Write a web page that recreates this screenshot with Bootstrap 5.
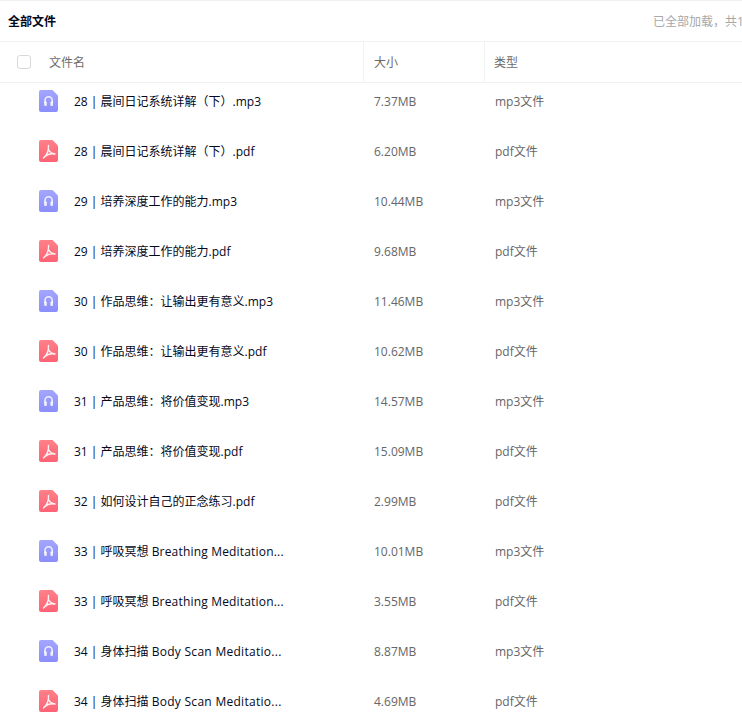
<!DOCTYPE html>
<html lang="zh-CN">
<head>
<meta charset="utf-8">
<title>全部文件</title>
<link href="https://cdn.jsdelivr.net/npm/bootstrap@5.3.0/dist/css/bootstrap.min.css" rel="stylesheet">
<style>
html,body{height:716px;overflow:hidden;background:#fff}
body{font-family:"Open Sans","Noto Sans CJK SC",sans-serif;font-size:12px;color:#03081a}
.shell{width:742px;height:716px;display:flex;flex-direction:column;overflow:hidden}
.topbar{height:42px;flex:none;border-top:1px solid #f1f2f4;border-bottom:1px solid #f1f2f4;padding-left:8px;overflow:hidden}
.topbar-title{font-weight:700;color:#03081a;padding-top:2px}
.topbar-status{color:#a8a8a8;white-space:nowrap;margin-left:auto;width:89px;overflow:hidden;flex:none;padding-top:2px}
.headrow{height:41px;flex:none;border-bottom:1px solid #f1f2f4;color:#6b6b6b}
.cell-name{width:364px;flex:none;border-right:1px solid #f1f2f4;height:100%}
.cell-name .lbl,.cell-size .lbl,.cell-type .lbl{padding-top:2px;display:block}
.cell-size{width:121px;flex:none;border-right:1px solid #f1f2f4;height:100%;padding-left:10px}
.cell-type{flex:1;padding-left:9px}
.tick{width:14px;height:14px;border:1px solid #d9d9d9;border-radius:3px;margin-left:17px;margin-right:18px;flex:none}
.listarea{flex:1;overflow:hidden;min-height:0}
.listinner{margin-top:-7px}
.filerow{height:50px}
.fname{padding-left:39px;width:364px;flex:none}
.fname svg{flex:none;margin-right:16px}
.fname span{white-space:nowrap;padding-top:2px}
.fname .latin{letter-spacing:.18px;padding-top:0}
.fname .latin-b{letter-spacing:.28px;padding-top:0}
.fsize{width:121px;flex:none;padding-left:10px;color:#666;padding-top:2px}
.ftype{flex:1;padding-left:10px;color:#666;padding-top:2px}
</style>
</head>
<body>
<svg width="0" height="0" class="d-block" aria-hidden="true">
<defs>
<linearGradient id="ga" x1="0" y1="0" x2="0" y2="1"><stop offset="0" stop-color="#a3a6ff"/><stop offset="1" stop-color="#8b8dfb"/></linearGradient>
<linearGradient id="gp" x1="0" y1="0" x2="0" y2="1"><stop offset="0" stop-color="#ff8088"/><stop offset="1" stop-color="#fc6375"/></linearGradient>
<symbol id="ic-audio" viewBox="0 0 19 22">
<path d="M2 0H13.500L19 5.500V20a2 2 0 0 1-2 2H2a2 2 0 0 1-2-2V2a2 2 0 0 1 2-2Z" fill="url(#ga)"/>
<path d="M6 13V10.300a3.600 3.600 0 0 1 7.200 0V13" fill="none" stroke="#fff" stroke-opacity=".85" stroke-width="1.600"/>
<rect x="5.200" y="11.500" width="2.600" height="4.500" rx="1" fill="#fff" fill-opacity=".85"/>
<rect x="11.400" y="11.500" width="2.600" height="4.500" rx="1" fill="#fff" fill-opacity=".85"/>
</symbol>
<symbol id="ic-pdf" viewBox="0 0 19 22">
<path d="M2 0H13.500L19 5.500V20a2 2 0 0 1-2 2H2a2 2 0 0 1-2-2V2a2 2 0 0 1 2-2Z" fill="url(#gp)"/>
<path d="M9.500 5.500C9.800 10 7.800 15 4.500 18M9.500 9.500C10.500 12 13 13.600 16 14M5.500 17C8 14.500 12 13.400 16 14" fill="none" stroke="#fff" stroke-opacity=".9" stroke-width="1.400" stroke-linecap="round"/>
</symbol>
</defs>
</svg>
<div class="shell">
  <div class="topbar d-flex align-items-center">
    <div class="topbar-title">全部文件</div>
    <div class="topbar-status">已全部加载，共1</div>
  </div>
  <div class="headrow d-flex align-items-center">
    <div class="cell-name d-flex align-items-center"><span class="tick"></span><span class="lbl">文件名</span></div>
    <div class="cell-size d-flex align-items-center"><span class="lbl">大小</span></div>
    <div class="cell-type"><span class="lbl">类型</span></div>
  </div>
  <div class="listarea">
    <div class="listinner">
      <div class="filerow d-flex align-items-center"><div class="fname d-flex align-items-center"><svg width="19" height="22"><use href="#ic-audio"/></svg><span>28 | 晨间日记系统详解（下）.mp3</span></div><div class="fsize">7.37MB</div><div class="ftype">mp3文件</div></div>
      <div class="filerow d-flex align-items-center"><div class="fname d-flex align-items-center"><svg width="19" height="22"><use href="#ic-pdf"/></svg><span>28 | 晨间日记系统详解（下）.pdf</span></div><div class="fsize">6.20MB</div><div class="ftype">pdf文件</div></div>
      <div class="filerow d-flex align-items-center"><div class="fname d-flex align-items-center"><svg width="19" height="22"><use href="#ic-audio"/></svg><span>29 | 培养深度工作的能力.mp3</span></div><div class="fsize">10.44MB</div><div class="ftype">mp3文件</div></div>
      <div class="filerow d-flex align-items-center"><div class="fname d-flex align-items-center"><svg width="19" height="22"><use href="#ic-pdf"/></svg><span>29 | 培养深度工作的能力.pdf</span></div><div class="fsize">9.68MB</div><div class="ftype">pdf文件</div></div>
      <div class="filerow d-flex align-items-center"><div class="fname d-flex align-items-center"><svg width="19" height="22"><use href="#ic-audio"/></svg><span>30 | 作品思维：让输出更有意义.mp3</span></div><div class="fsize">11.46MB</div><div class="ftype">mp3文件</div></div>
      <div class="filerow d-flex align-items-center"><div class="fname d-flex align-items-center"><svg width="19" height="22"><use href="#ic-pdf"/></svg><span>30 | 作品思维：让输出更有意义.pdf</span></div><div class="fsize">10.62MB</div><div class="ftype">pdf文件</div></div>
      <div class="filerow d-flex align-items-center"><div class="fname d-flex align-items-center"><svg width="19" height="22"><use href="#ic-audio"/></svg><span>31 | 产品思维：将价值变现.mp3</span></div><div class="fsize">14.57MB</div><div class="ftype">mp3文件</div></div>
      <div class="filerow d-flex align-items-center"><div class="fname d-flex align-items-center"><svg width="19" height="22"><use href="#ic-pdf"/></svg><span>31 | 产品思维：将价值变现.pdf</span></div><div class="fsize">15.09MB</div><div class="ftype">pdf文件</div></div>
      <div class="filerow d-flex align-items-center"><div class="fname d-flex align-items-center"><svg width="19" height="22"><use href="#ic-pdf"/></svg><span>32 | 如何设计自己的正念练习.pdf</span></div><div class="fsize">2.99MB</div><div class="ftype">pdf文件</div></div>
      <div class="filerow d-flex align-items-center"><div class="fname d-flex align-items-center"><svg width="19" height="22"><use href="#ic-audio"/></svg><span>33 | 呼吸冥想 <span class="latin">Breathing Meditation...</span></span></div><div class="fsize">10.01MB</div><div class="ftype">mp3文件</div></div>
      <div class="filerow d-flex align-items-center"><div class="fname d-flex align-items-center"><svg width="19" height="22"><use href="#ic-pdf"/></svg><span>33 | 呼吸冥想 <span class="latin">Breathing Meditation...</span></span></div><div class="fsize">3.55MB</div><div class="ftype">pdf文件</div></div>
      <div class="filerow d-flex align-items-center"><div class="fname d-flex align-items-center"><svg width="19" height="22"><use href="#ic-audio"/></svg><span>34 | 身体扫描 <span class="latin-b">Body Scan Meditatio...</span></span></div><div class="fsize">8.87MB</div><div class="ftype">mp3文件</div></div>
      <div class="filerow d-flex align-items-center"><div class="fname d-flex align-items-center"><svg width="19" height="22"><use href="#ic-pdf"/></svg><span>34 | 身体扫描 <span class="latin-b">Body Scan Meditatio...</span></span></div><div class="fsize">4.69MB</div><div class="ftype">pdf文件</div></div>
    </div>
  </div>
</div>
</body>
</html>
